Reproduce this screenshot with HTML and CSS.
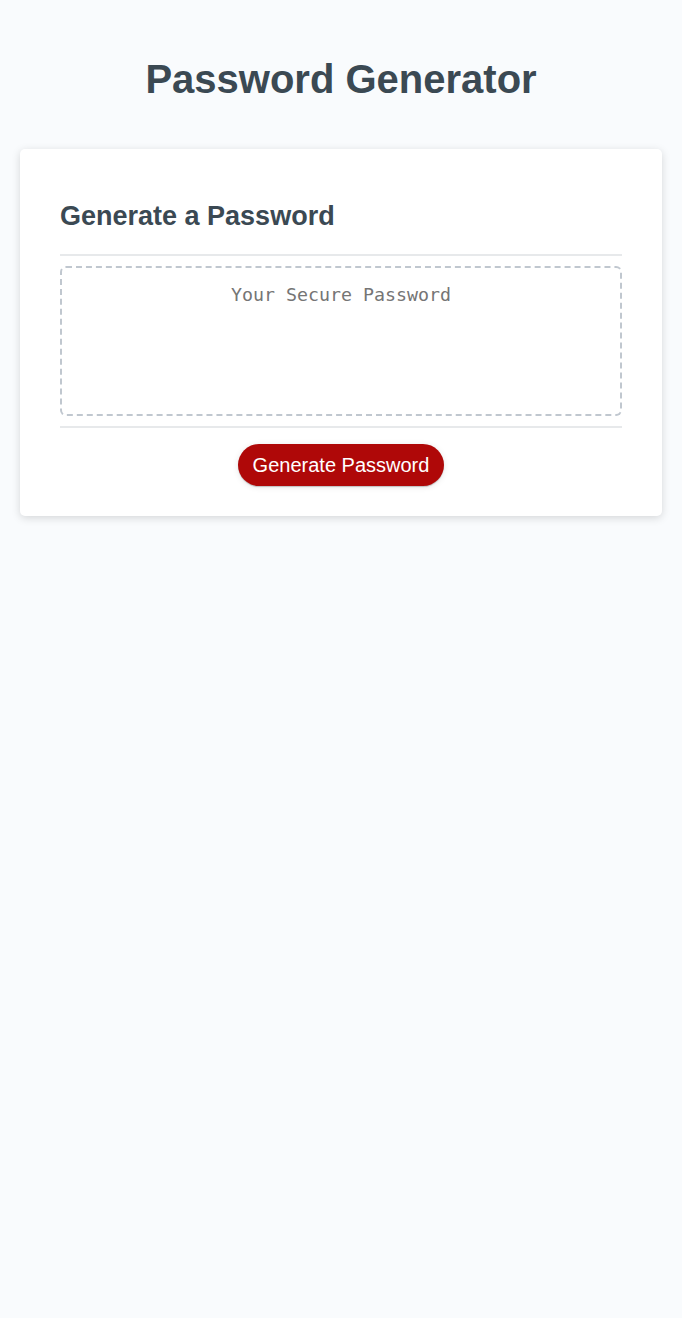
FILE: index.html
```html
<!DOCTYPE html>
<html lang="en">
<head>
<meta charset="UTF-8">
<title>Password Generator</title>
<link rel="stylesheet" href="styles.css">
</head>
<body>
<div class="wrapper">
  <header class="header">
    <h1 class="title">Password Generator</h1>
  </header>
  <div class="card">
    <div class="card-header">
      <h2 class="card-title">Generate a Password</h2>
    </div>
    <div class="card-body">
      <textarea class="password" readonly placeholder="Your Secure Password" aria-label="Generated Password"></textarea>
    </div>
    <div class="card-footer">
      <button class="btn" type="button">Generate Password</button>
    </div>
  </div>
</div>
</body>
</html>
```

FILE: styles.css
```css
*, *::before, *::after {
  box-sizing: border-box;
}

html, body {
  margin: 0;
  padding: 0;
  height: 100%;
}

body {
  font-family: "Liberation Sans", Arial, sans-serif;
  background-color: #f9fbfd;
}

.wrapper {
  padding: 30px 20px 0;
}

.header {
  text-align: center;
  padding: 0 20px 20px;
  color: #3b4953;
}

.title {
  font-size: 40px;
  font-weight: bold;
  margin: 26.8px 0;
}

.card {
  background-color: #ffffff;
  border-radius: 5px;
  box-shadow: rgba(0, 0, 0, 0.15) 0 2px 8px 0;
  color: #3b4953;
  font-size: 18px;
  margin: 0 auto;
  max-width: 800px;
  padding: 30px 40px;
}

.card-title {
  font-size: 27px;
  font-weight: bold;
  margin: 22.4px 0;
}

.card-header::after {
  content: "";
  display: block;
  width: 100%;
  height: 2px;
  background: #e7e9eb;
}

.password {
  display: block;
  width: 100%;
  height: 150px;
  margin: 10px 0;
  padding: 16px 15px 84px;
  border: 2px dashed #c0c7cf;
  border-radius: 6px;
  font-family: "DejaVu Sans Mono", "Liberation Mono", monospace;
  font-size: 18.3px;
  text-align: center;
  resize: none;
  overflow: hidden;
  outline: none;
  background: #ffffff;
  color: #3b4953;
}

.password::placeholder {
  color: #757575;
  opacity: 1;
}

.card-footer {
  display: flex;
  flex-direction: column;
  align-items: center;
}

.card-footer::before {
  content: "";
  display: block;
  width: 100%;
  height: 2px;
  background: #e7e9eb;
}

.btn {
  border: none;
  background-color: #af0808;
  border-radius: 25px;
  box-shadow: rgba(0, 0, 0, 0.1) 0 1px 6px 0, rgba(0, 0, 0, 0.2) 0 1px 1px 0;
  color: #ffffff;
  font-family: "Liberation Sans", Arial, sans-serif;
  font-size: 20px;
  line-height: 22px;
  margin: 16px 0 0;
  padding: 10px 15px;
  cursor: pointer;
}
```
